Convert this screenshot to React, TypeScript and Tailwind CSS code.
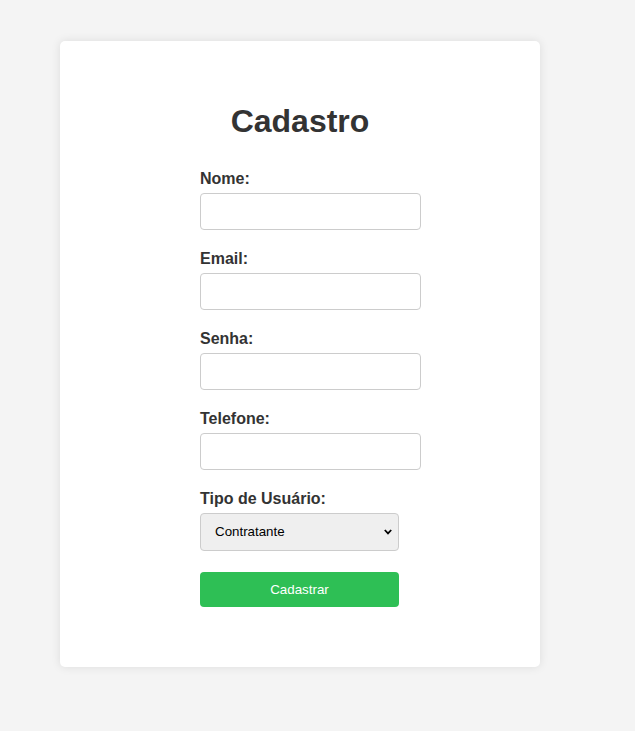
import React from 'react';

export default function App() {
  const fields = ['Nome:', 'Email:', 'Senha:', 'Telefone:'];

  return (
    <div className="min-h-screen bg-[#f4f4f4] pt-[41px] font-['Liberation_Sans',Arial,sans-serif]">
      <div className="ml-[60px] w-[480px] rounded-[5px] bg-white pt-[62px] pb-[60px] shadow-[0_0_10px_rgba(0,0,0,0.1)]">
        <h2 className="text-center text-[32px] leading-[37px] font-bold text-[#333]">Cadastro</h2>
        <form className="mx-auto mt-[30px] w-[200px]" onSubmit={(e) => e.preventDefault()}>
          {fields.map((f) => (
            <div key={f}>
              <label className="mb-[5px] block text-[16px] leading-[18px] font-bold text-[#333]">{f}</label>
              <input
                type={f === 'Senha:' ? 'password' : 'text'}
                className="mb-[20px] block h-[37px] w-[221px] rounded-[4px] border border-[#ccc] bg-white px-[10px] text-[13px] outline-none"
              />
            </div>
          ))}
          <label className="mb-[5px] block text-[16px] leading-[18px] font-bold text-[#333]">Tipo de Usuário:</label>
          <div className="relative mb-[21px] h-[38px] w-[199px]">
            <select className="h-full w-full appearance-none rounded-[4px] border border-[#ccc] bg-[#efefef] pl-[14px] text-[13.33px] text-black outline-none">
              <option>Contratante</option>
              <option>Prestador</option>
            </select>
            <svg
              className="pointer-events-none absolute top-[16px] right-[7px]"
              width="8"
              height="6"
              viewBox="0 0 8 6"
            >
              <path d="M0.8 1 L4 4.4 L7.2 1" fill="none" stroke="#000" strokeWidth="1.8" />
            </svg>
          </div>
          <button
            type="submit"
            className="block h-[35px] w-[199px] rounded-[4px] bg-[#2ebf55] text-[13.33px] text-white"
          >
            Cadastrar
          </button>
        </form>
      </div>
    </div>
  );
}
